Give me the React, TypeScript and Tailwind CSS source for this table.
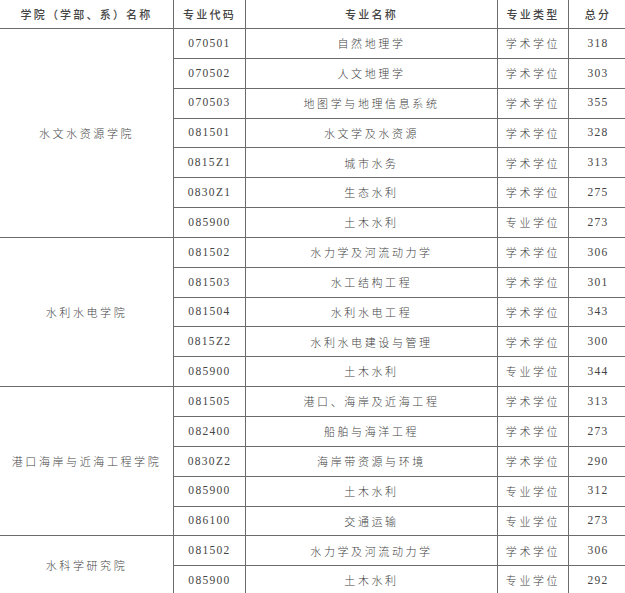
import React from "react"

// ─── Data ──────────────────────────────────────────────────────────────────

interface Major {
    code: string
    name: string
    type: string
    score: string
}

interface College {
    name: string
    majors: Major[]
}

const colleges: College[] = [
    {
        name: "水文水资源学院",
        majors: [
            { code: "070501", name: "自然地理学", type: "学术学位", score: "318" },
            { code: "070502", name: "人文地理学", type: "学术学位", score: "303" },
            { code: "070503", name: "地图学与地理信息系统", type: "学术学位", score: "355" },
            { code: "081501", name: "水文学及水资源", type: "学术学位", score: "328" },
            { code: "0815Z1", name: "城市水务", type: "学术学位", score: "313" },
            { code: "0830Z1", name: "生态水利", type: "学术学位", score: "275" },
            { code: "085900", name: "土木水利", type: "专业学位", score: "273" },
        ],
    },
    {
        name: "水利水电学院",
        majors: [
            { code: "081502", name: "水力学及河流动力学", type: "学术学位", score: "306" },
            { code: "081503", name: "水工结构工程", type: "学术学位", score: "301" },
            { code: "081504", name: "水利水电工程", type: "学术学位", score: "343" },
            { code: "0815Z2", name: "水利水电建设与管理", type: "学术学位", score: "300" },
            { code: "085900", name: "土木水利", type: "专业学位", score: "344" },
        ],
    },
    {
        name: "港口海岸与近海工程学院",
        majors: [
            { code: "081505", name: "港口、海岸及近海工程", type: "学术学位", score: "313" },
            { code: "082400", name: "船舶与海洋工程", type: "学术学位", score: "273" },
            { code: "0830Z2", name: "海岸带资源与环境", type: "学术学位", score: "290" },
            { code: "085900", name: "土木水利", type: "专业学位", score: "312" },
            { code: "086100", name: "交通运输", type: "专业学位", score: "273" },
        ],
    },
    {
        name: "水科学研究院",
        majors: [
            { code: "081502", name: "水力学及河流动力学", type: "学术学位", score: "306" },
            { code: "085900", name: "土木水利", type: "专业学位", score: "292" },
        ],
    },
]

const cjk = "font-['Noto_Sans_CJK_SC',sans-serif] text-[11px] tracking-[2.6px] font-light"
const num = "font-['Liberation_Serif',serif] text-[11.5px] tracking-[1.3px]"
const cell = "border border-[#6b6b6b] text-center align-middle text-[#444] p-0"

// ─── App ───────────────────────────────────────────────────────────────────

export default function App() {
    return (
        <div className="w-[625px] h-[593px] overflow-hidden bg-white">
            <table className="table-fixed border-collapse -mt-px -ml-px w-[628px]">
                <colgroup>
                    <col className="w-[174px]" />
                    <col className="w-[72px]" />
                    <col className="w-[252px]" />
                    <col className="w-[71px]" />
                    <col className="w-[59px]" />
                </colgroup>
                <thead>
                    <tr className="h-[29px]">
                        {["学院（学部、系）名称", "专业代码", "专业名称", "专业类型", "总分"].map((h) => (
                            <th
                                key={h}
                                className={`${cell} font-['Noto_Sans_CJK_SC',sans-serif] text-[11px] tracking-[2.2px] font-medium text-[#2a2a2a]`}
                            >
                                {h}
                            </th>
                        ))}
                    </tr>
                </thead>
                <tbody>
                    {colleges.map((c) =>
                        c.majors.map((m, i) => (
                            <tr key={c.name + m.code} className="h-[29.85px]">
                                {i === 0 && (
                                    <td rowSpan={c.majors.length} className={`${cell} ${cjk}`}>
                                        {c.name}
                                    </td>
                                )}
                                <td className={`${cell} ${num}`}>{m.code}</td>
                                <td className={`${cell} ${cjk}`}>{m.name}</td>
                                <td className={`${cell} ${cjk}`}>{m.type}</td>
                                <td className={`${cell} ${num}`}>{m.score}</td>
                            </tr>
                        ))
                    )}
                </tbody>
            </table>
        </div>
    )
}
